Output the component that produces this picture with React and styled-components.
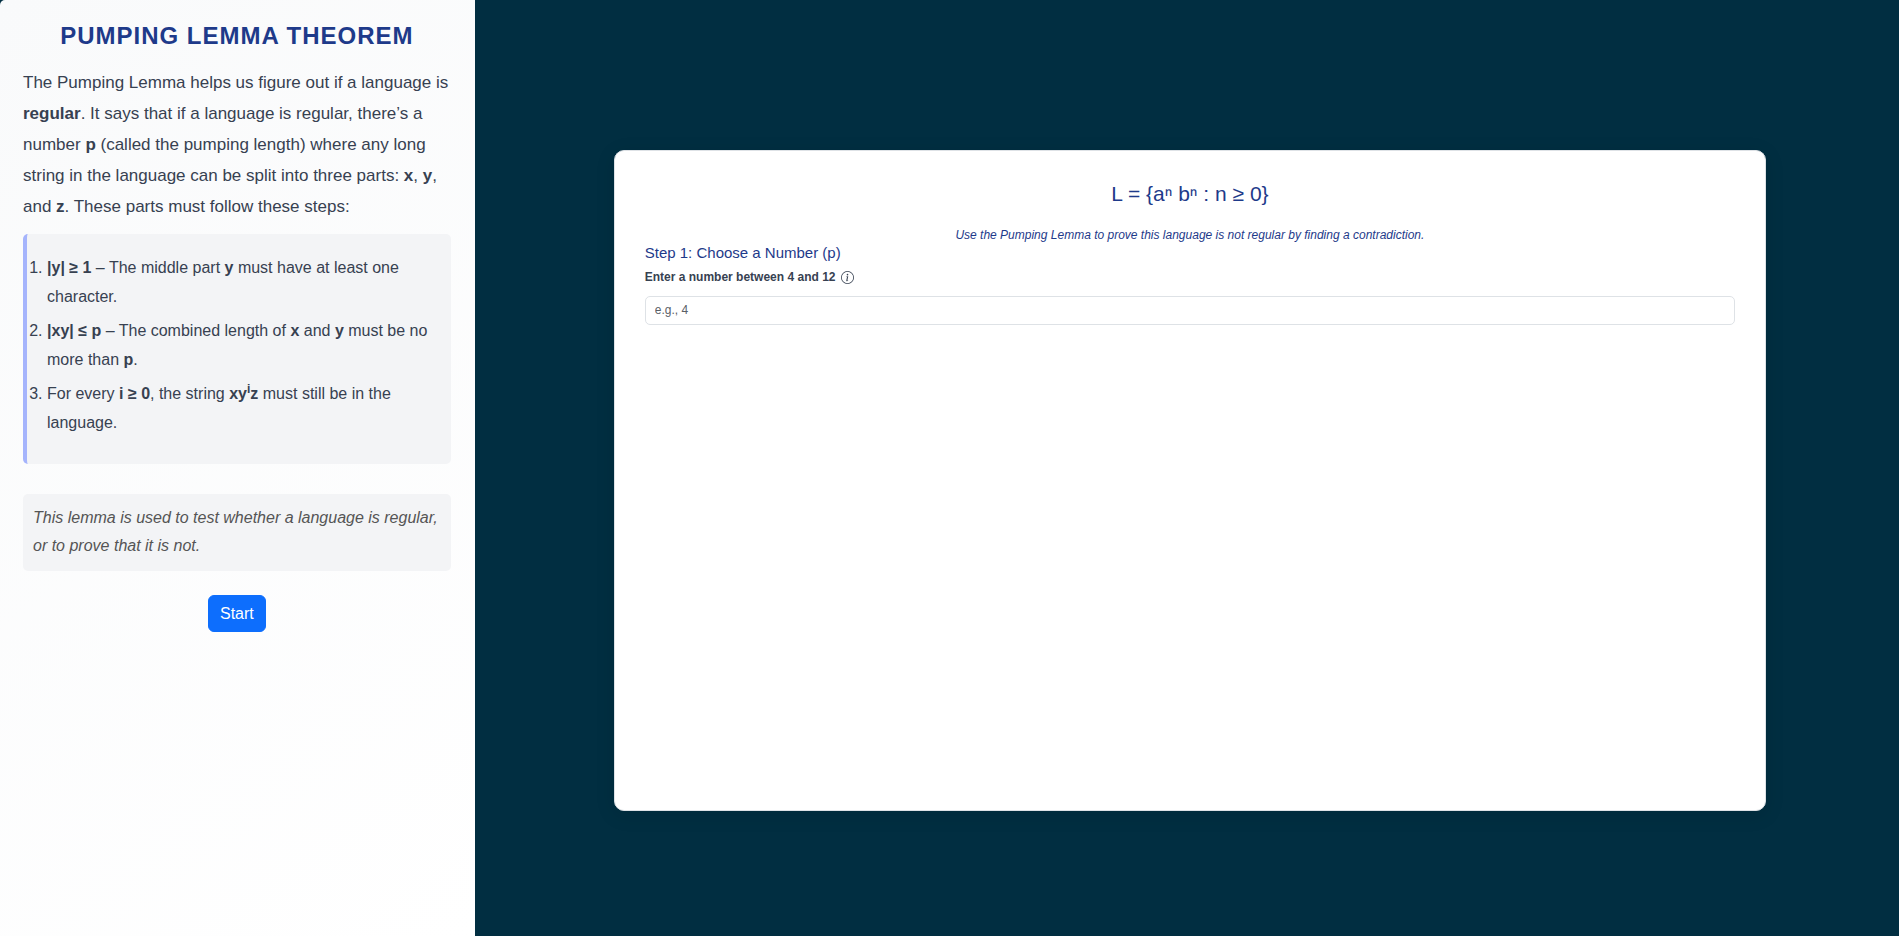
import { useState } from "react";
import styled, { createGlobalStyle } from "styled-components";
import { BsInfoCircle } from "react-icons/bs";

const GlobalStyle = createGlobalStyle`
  * {
    box-sizing: border-box;
  }
  body {
    margin: 0;
    background: #012e41;
    color: #374151;
    font-family: "Liberation Sans", Arial, sans-serif;
    font-size: 16px;
  }
`;

const Page = styled.div`
  display: flex;
  min-height: 100vh;
`;

const Sidebar = styled.aside`
  width: 25%;
  padding: 20px 24px 24px 23px;
  border-top-left-radius: 5px;
  background: linear-gradient(145deg, #f9fafb, #ffffff);
`;

const Title = styled.h1`
  margin: 0 0 15px;
  color: #1e3a8a;
  font-size: 24px;
  line-height: 32px;
  letter-spacing: 1px;
  text-align: center;
  text-transform: uppercase;
`;

const Intro = styled.p`
  margin: 0 0 12px;
  font-size: 17px;
  line-height: 31px;
`;

const Steps = styled.ol`
  margin: 0 0 30px;
  padding: 19px 20px 22px;
  background: #f3f4f6;
  border-left: 4px solid #a5b4fc;
  border-radius: 5px;
  line-height: 29px;
`;

const Step = styled.li`
  margin-bottom: 5px;
`;

const Power = styled.sup`
  font-size: 12px;
  line-height: 0;
`;

const Note = styled.p`
  margin: 0 0 24px;
  padding: 10px 10px 11px;
  background: #f3f4f6;
  border-radius: 5px;
  color: #555;
  font-style: italic;
  line-height: 28px;
`;

const StartButton = styled.button`
  display: block;
  margin: 0 auto;
  padding: 6px 11px;
  border: 1px solid #0d6efd;
  border-radius: 6px;
  background: #0d6efd;
  color: #fff;
  font: inherit;
  line-height: 23px;
  cursor: pointer;
`;

const Main = styled.main`
  display: flex;
  flex: 1;
  padding: 150px 133px 125px 139px;
`;

const Card = styled.section`
  flex: 1;
  padding: 30px;
  border: 1px solid #dee2e6;
  border-radius: 10px;
  background: #fff;
  box-shadow: 0 4px 20px rgba(0, 0, 0, 0.1);
`;

const Language = styled.h2`
  margin: 0 0 20px;
  color: #1e3a8a;
  font-size: 21px;
  font-weight: 500;
  line-height: 25px;
  text-align: center;
`;

const Hint = styled.p`
  margin: 0;
  color: #1e3a8a;
  font-size: 12px;
  font-style: italic;
  line-height: 18px;
  text-align: center;
`;

const StepTitle = styled.h3`
  margin: 0 0 6px;
  color: #1e3a8a;
  font-size: 15px;
  font-weight: 500;
  line-height: 18px;
`;

const LabelRow = styled.div`
  display: flex;
  align-items: center;
  gap: 6px;
  margin-bottom: 10px;
`;

const Label = styled.label`
  font-size: 12px;
  font-weight: bold;
  line-height: 18px;
`;

const NumberInput = styled.input`
  display: block;
  width: 100%;
  padding: 4px 9px;
  border: 1px solid #dee2e6;
  border-radius: 5px;
  color: #212529;
  font: inherit;
  font-size: 12px;
  line-height: 19px;

  &::placeholder {
    color: #5a6067;
  }
`;

export default function App() {
  const [pump, setPump] = useState("");

  return (
    <>
      <GlobalStyle />
      <Page>
        <Sidebar>
          <Title>Pumping Lemma Theorem</Title>
          <Intro>
            The Pumping Lemma helps us figure out if a language is <strong>regular</strong>. It says
            that if a language is regular, there’s a number <strong>p</strong> (called the pumping
            length) where any long string in the language can be split into three parts:{" "}
            <strong>x</strong>, <strong>y</strong>, and <strong>z</strong>. These parts must follow
            these steps:
          </Intro>
          <Steps>
            <Step>
              <strong>|y| ≥ 1</strong> – The middle part <strong>y</strong> must have at least one
              character.
            </Step>
            <Step>
              <strong>|xy| ≤ p</strong> – The combined length of <strong>x</strong> and{" "}
              <strong>y</strong> must be no more than <strong>p</strong>.
            </Step>
            <Step>
              For every <strong>i ≥ 0</strong>, the string{" "}
              <strong>
                xy<Power>i</Power>z
              </strong>{" "}
              must still be in the language.
            </Step>
          </Steps>
          <Note>This lemma is used to test whether a language is regular, or to prove that it is not.</Note>
          <StartButton type="button">Start</StartButton>
        </Sidebar>
        <Main>
          <Card>
            <Language>L = {"{aⁿ bⁿ : n ≥ 0}"}</Language>
            <Hint>
              Use the Pumping Lemma to prove this language is not regular by finding a contradiction.
            </Hint>
            <StepTitle>Step 1: Choose a Number (p)</StepTitle>
            <LabelRow>
              <Label htmlFor="pump">Enter a number between 4 and 12</Label>
              <BsInfoCircle size={13} />
            </LabelRow>
            <NumberInput
              id="pump"
              type="text"
              inputMode="numeric"
              placeholder="e.g., 4"
              value={pump}
              onChange={(e) => setPump(e.target.value)}
            />
          </Card>
        </Main>
      </Page>
    </>
  );
}
